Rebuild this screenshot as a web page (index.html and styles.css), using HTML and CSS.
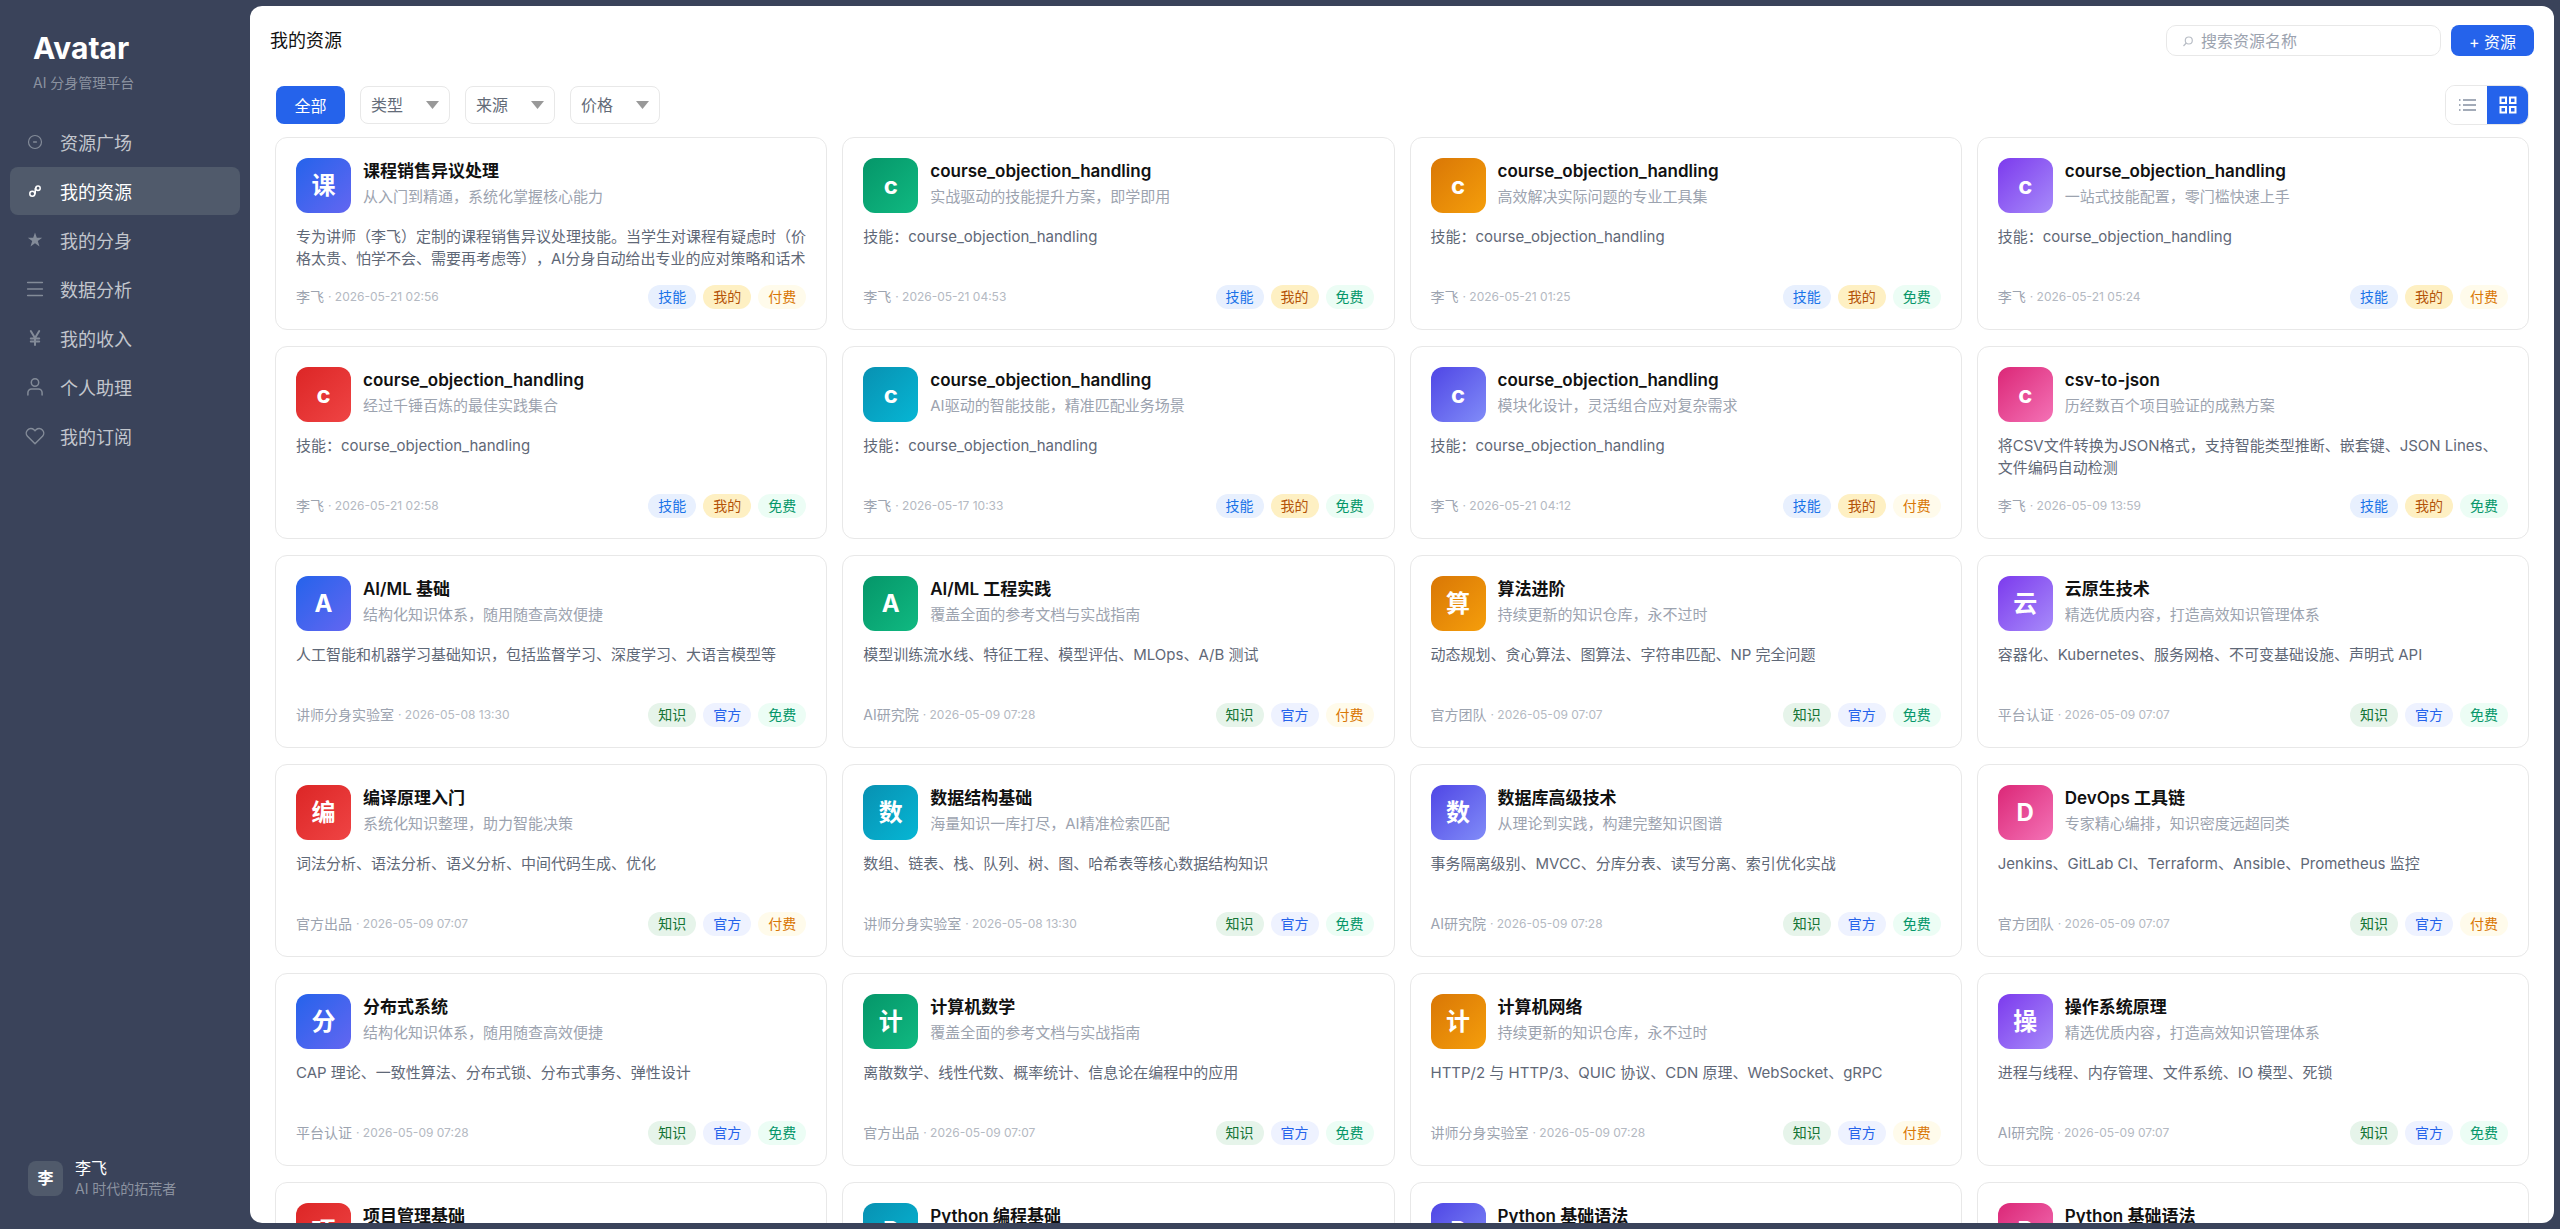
FILE: index.html
```html
<!DOCTYPE html>
<html lang="zh-CN">
<head>
<meta charset="utf-8">
<meta name="viewport" content="width=device-width, initial-scale=1">
<title>我的资源 - Avatar</title>
<link rel="stylesheet" href="styles.css">
</head>
<body>
<div class="app">
  <aside class="sidebar">
    <div class="brand">
      <h1 class="brand-name">Avatar</h1>
      <p class="brand-sub">AI 分身管理平台</p>
    </div>
    <nav class="nav">
      <a class="nav-item" href="#"><svg class="nav-icon" viewBox="0 0 20 20"><circle cx="10" cy="10" r="6.500" stroke-width="1.200"/><path d="M8.600 10h2.800" stroke-width="1.300"/></svg>资源广场</a>
      <a class="nav-item active" href="#"><svg class="nav-icon" viewBox="0 0 20 20"><circle cx="7.300" cy="12.700" r="2.500"/><circle cx="13" cy="7.200" r="2.200"/><path d="M9.800 13.200C11.600 11.800 8.800 8.200 10.900 6.600"/></svg>我的资源</a>
      <a class="nav-item" href="#"><svg class="nav-icon" viewBox="0 0 20 20"><path class="solid" d="M10 2.600l1.800 5.200h5.400l-4.400 3.300 1.700 5.300-4.500-3.200-4.500 3.200 1.700-5.300-4.400-3.300h5.400z"/></svg>我的分身</a>
      <a class="nav-item" href="#"><svg class="nav-icon" viewBox="0 0 20 20"><path d="M2.600 3.500h14.800M2.600 10h14.800M2.600 16.500h14.800"/></svg>数据分析</a>
      <a class="nav-item" href="#"><svg class="nav-icon" viewBox="0 0 20 20"><path d="M5.800 3l4.200 7 4.200-7M10 10v7M5.800 10.500h8.400M5.800 13.500h8.400" stroke-width="2"/></svg>我的收入</a>
      <a class="nav-item" href="#"><svg class="nav-icon" viewBox="0 0 20 20"><circle cx="10" cy="5.500" r="3.700"/><path d="M2.900 18v-2.300a3.700 3.700 0 0 1 3.700-3.700h6.800a3.700 3.700 0 0 1 3.700 3.700V18"/></svg>个人助理</a>
      <a class="nav-item" href="#"><svg class="nav-icon" viewBox="0 0 20 20"><path d="M10 17.800L2.500 10.300a4.600 4.600 0 0 1 6.500-6.500l1 1 1-1a4.600 4.600 0 0 1 6.500 6.500z"/></svg>我的订阅</a>
    </nav>
    <div class="user">
      <span class="user-avatar">李</span>
      <div>
        <p class="user-name">李飞</p>
        <p class="user-sub">AI 时代的拓荒者</p>
      </div>
    </div>
  </aside>

  <main class="panel">
    <header class="topbar">
      <h2 class="page-title">我的资源</h2>
      <label class="search">
        <svg class="search-icon" viewBox="0 0 12 12" aria-hidden="true"><circle cx="6.800" cy="5.500" r="3.500"/><path d="M4.300 8L1.500 11"/></svg>
        <input type="search" placeholder="搜索资源名称" aria-label="搜索资源名称">
      </label>
      <button class="btn-add" type="button">+ 资源</button>
    </header>

    <div class="filters">
      <button class="btn-all" type="button">全部</button>
      <span class="select"><select aria-label="类型"><option>类型</option></select></span>
      <span class="select"><select aria-label="来源"><option>来源</option></select></span>
      <span class="select"><select aria-label="价格"><option>价格</option></select></span>
      <div class="view-toggle">
        <button type="button" aria-label="列表"><svg viewBox="0 0 18 18"><path d="M5 4h13M5 9h13M5 14h13M1 4h1.500M1 9h1.500M1 14h1.500"/></svg></button>
        <button class="active" type="button" aria-label="网格"><svg viewBox="0 0 18 18"><path d="M1.500 1.500h5.500v5.500h-5.500zM11 1.500h5.500v5.500h-5.500zM1.500 11h5.500v5.500h-5.500zM11 11h5.500v5.500h-5.500z"/></svg></button>
      </div>
    </div>

    <section class="cards">
      <article class="card"><div class="head"><span class="logo">课</span><div><h3>课程销售异议处理</h3><p>从入门到精通，系统化掌握核心能力</p></div></div><p class="desc">专为讲师（李飞）定制的课程销售异议处理技能。当学生对课程有疑虑时（价格太贵、怕学不会、需要再考虑等），AI分身自动给出专业的应对策略和话术</p><footer><span class="author">李飞</span><time>· 2026-05-21 02:56</time><span class="tag skill">技能</span><span class="tag mine">我的</span><span class="tag paid">付费</span></footer></article>
      <article class="card"><div class="head"><span class="logo">c</span><div><h3>course_objection_handling</h3><p>实战驱动的技能提升方案，即学即用</p></div></div><p class="desc">技能：course_objection_handling</p><footer><span class="author">李飞</span><time>· 2026-05-21 04:53</time><span class="tag skill">技能</span><span class="tag mine">我的</span><span class="tag free">免费</span></footer></article>
      <article class="card"><div class="head"><span class="logo">c</span><div><h3>course_objection_handling</h3><p>高效解决实际问题的专业工具集</p></div></div><p class="desc">技能：course_objection_handling</p><footer><span class="author">李飞</span><time>· 2026-05-21 01:25</time><span class="tag skill">技能</span><span class="tag mine">我的</span><span class="tag free">免费</span></footer></article>
      <article class="card"><div class="head"><span class="logo">c</span><div><h3>course_objection_handling</h3><p>一站式技能配置，零门槛快速上手</p></div></div><p class="desc">技能：course_objection_handling</p><footer><span class="author">李飞</span><time>· 2026-05-21 05:24</time><span class="tag skill">技能</span><span class="tag mine">我的</span><span class="tag paid">付费</span></footer></article>

      <article class="card"><div class="head"><span class="logo">c</span><div><h3>course_objection_handling</h3><p>经过千锤百炼的最佳实践集合</p></div></div><p class="desc">技能：course_objection_handling</p><footer><span class="author">李飞</span><time>· 2026-05-21 02:58</time><span class="tag skill">技能</span><span class="tag mine">我的</span><span class="tag free">免费</span></footer></article>
      <article class="card"><div class="head"><span class="logo">c</span><div><h3>course_objection_handling</h3><p>AI驱动的智能技能，精准匹配业务场景</p></div></div><p class="desc">技能：course_objection_handling</p><footer><span class="author">李飞</span><time>· 2026-05-17 10:33</time><span class="tag skill">技能</span><span class="tag mine">我的</span><span class="tag free">免费</span></footer></article>
      <article class="card"><div class="head"><span class="logo">c</span><div><h3>course_objection_handling</h3><p>模块化设计，灵活组合应对复杂需求</p></div></div><p class="desc">技能：course_objection_handling</p><footer><span class="author">李飞</span><time>· 2026-05-21 04:12</time><span class="tag skill">技能</span><span class="tag mine">我的</span><span class="tag paid">付费</span></footer></article>
      <article class="card"><div class="head"><span class="logo">c</span><div><h3>csv-to-json</h3><p>历经数百个项目验证的成熟方案</p></div></div><p class="desc">将CSV文件转换为JSON格式，支持智能类型推断、嵌套键、JSON Lines、文件编码自动检测</p><footer><span class="author">李飞</span><time>· 2026-05-09 13:59</time><span class="tag skill">技能</span><span class="tag mine">我的</span><span class="tag free">免费</span></footer></article>

      <article class="card"><div class="head"><span class="logo">A</span><div><h3>AI/ML 基础</h3><p>结构化知识体系，随用随查高效便捷</p></div></div><p class="desc">人工智能和机器学习基础知识，包括监督学习、深度学习、大语言模型等</p><footer><span class="author">讲师分身实验室</span><time>· 2026-05-08 13:30</time><span class="tag know">知识</span><span class="tag official">官方</span><span class="tag free">免费</span></footer></article>
      <article class="card"><div class="head"><span class="logo">A</span><div><h3>AI/ML 工程实践</h3><p>覆盖全面的参考文档与实战指南</p></div></div><p class="desc">模型训练流水线、特征工程、模型评估、MLOps、A/B 测试</p><footer><span class="author">AI研究院</span><time>· 2026-05-09 07:28</time><span class="tag know">知识</span><span class="tag official">官方</span><span class="tag paid">付费</span></footer></article>
      <article class="card"><div class="head"><span class="logo">算</span><div><h3>算法进阶</h3><p>持续更新的知识仓库，永不过时</p></div></div><p class="desc">动态规划、贪心算法、图算法、字符串匹配、NP 完全问题</p><footer><span class="author">官方团队</span><time>· 2026-05-09 07:07</time><span class="tag know">知识</span><span class="tag official">官方</span><span class="tag free">免费</span></footer></article>
      <article class="card"><div class="head"><span class="logo">云</span><div><h3>云原生技术</h3><p>精选优质内容，打造高效知识管理体系</p></div></div><p class="desc">容器化、Kubernetes、服务网格、不可变基础设施、声明式 API</p><footer><span class="author">平台认证</span><time>· 2026-05-09 07:07</time><span class="tag know">知识</span><span class="tag official">官方</span><span class="tag free">免费</span></footer></article>

      <article class="card"><div class="head"><span class="logo">编</span><div><h3>编译原理入门</h3><p>系统化知识整理，助力智能决策</p></div></div><p class="desc">词法分析、语法分析、语义分析、中间代码生成、优化</p><footer><span class="author">官方出品</span><time>· 2026-05-09 07:07</time><span class="tag know">知识</span><span class="tag official">官方</span><span class="tag paid">付费</span></footer></article>
      <article class="card"><div class="head"><span class="logo">数</span><div><h3>数据结构基础</h3><p>海量知识一库打尽，AI精准检索匹配</p></div></div><p class="desc">数组、链表、栈、队列、树、图、哈希表等核心数据结构知识</p><footer><span class="author">讲师分身实验室</span><time>· 2026-05-08 13:30</time><span class="tag know">知识</span><span class="tag official">官方</span><span class="tag free">免费</span></footer></article>
      <article class="card"><div class="head"><span class="logo">数</span><div><h3>数据库高级技术</h3><p>从理论到实践，构建完整知识图谱</p></div></div><p class="desc">事务隔离级别、MVCC、分库分表、读写分离、索引优化实战</p><footer><span class="author">AI研究院</span><time>· 2026-05-09 07:28</time><span class="tag know">知识</span><span class="tag official">官方</span><span class="tag free">免费</span></footer></article>
      <article class="card"><div class="head"><span class="logo">D</span><div><h3>DevOps 工具链</h3><p>专家精心编排，知识密度远超同类</p></div></div><p class="desc">Jenkins、GitLab CI、Terraform、Ansible、Prometheus 监控</p><footer><span class="author">官方团队</span><time>· 2026-05-09 07:07</time><span class="tag know">知识</span><span class="tag official">官方</span><span class="tag paid">付费</span></footer></article>

      <article class="card"><div class="head"><span class="logo">分</span><div><h3>分布式系统</h3><p>结构化知识体系，随用随查高效便捷</p></div></div><p class="desc">CAP 理论、一致性算法、分布式锁、分布式事务、弹性设计</p><footer><span class="author">平台认证</span><time>· 2026-05-09 07:28</time><span class="tag know">知识</span><span class="tag official">官方</span><span class="tag free">免费</span></footer></article>
      <article class="card"><div class="head"><span class="logo">计</span><div><h3>计算机数学</h3><p>覆盖全面的参考文档与实战指南</p></div></div><p class="desc">离散数学、线性代数、概率统计、信息论在编程中的应用</p><footer><span class="author">官方出品</span><time>· 2026-05-09 07:07</time><span class="tag know">知识</span><span class="tag official">官方</span><span class="tag free">免费</span></footer></article>
      <article class="card"><div class="head"><span class="logo">计</span><div><h3>计算机网络</h3><p>持续更新的知识仓库，永不过时</p></div></div><p class="desc">HTTP/2 与 HTTP/3、QUIC 协议、CDN 原理、WebSocket、gRPC</p><footer><span class="author">讲师分身实验室</span><time>· 2026-05-09 07:28</time><span class="tag know">知识</span><span class="tag official">官方</span><span class="tag paid">付费</span></footer></article>
      <article class="card"><div class="head"><span class="logo">操</span><div><h3>操作系统原理</h3><p>精选优质内容，打造高效知识管理体系</p></div></div><p class="desc">进程与线程、内存管理、文件系统、IO 模型、死锁</p><footer><span class="author">AI研究院</span><time>· 2026-05-09 07:07</time><span class="tag know">知识</span><span class="tag official">官方</span><span class="tag free">免费</span></footer></article>

      <article class="card"><div class="head"><span class="logo">项</span><div><h3>项目管理基础</h3></div></div></article>
      <article class="card"><div class="head"><span class="logo">P</span><div><h3>Python 编程基础</h3></div></div></article>
      <article class="card"><div class="head"><span class="logo">P</span><div><h3>Python 基础语法</h3></div></div></article>
      <article class="card"><div class="head"><span class="logo">P</span><div><h3>Python 基础语法</h3></div></div></article>
    </section>
  </main>
</div>
</body>
</html>
```
FILE: styles.css
```css
* { box-sizing: border-box; margin: 0; padding: 0; }

body {
  font-family: Inter, "Noto Sans CJK SC", sans-serif;
  font-size: 16px;
  background: #3a435a;
  color: #111;
  text-spacing-trim: space-all;
}

button, input, select { font: inherit; }
button { border: 0; cursor: pointer; }

.app {
  display: grid;
  grid-template-columns: 250px minmax(0, 1fr);
  height: 100vh;
}

/* Sidebar */
.sidebar { display: flex; flex-direction: column; }
.brand { padding: 30px 33px 0; }
.brand-name { font-size: 30px; line-height: 36px; font-weight: 700; color: #fff; }
.brand-sub { margin-top: 7px; font-size: 14px; line-height: 20px; color: #8b92a0; }

.nav { display: flex; flex-direction: column; gap: 1px; padding: 25px 10px 0; }
.nav-item {
  display: flex;
  align-items: center;
  gap: 15px;
  height: 48px;
  padding: 0 15px;
  border-radius: 8px;
  font-size: 18px;
  color: #c2c6cd;
  text-decoration: none;
}
.nav-item.active { background: #505a6b; color: #fff; }
.nav-icon { width: 20px; height: 20px; fill: none; stroke: #838b98; stroke-width: 1.5; stroke-linecap: round; stroke-linejoin: round; }
.nav-icon .solid { fill: #838b98; stroke: none; }
.active .nav-icon { stroke: #fff; }

.user { display: flex; align-items: center; gap: 12px; margin-top: auto; padding: 0 28px 30px; }
.user-avatar {
  width: 35px;
  height: 35px;
  border-radius: 8px;
  background: #505a6b;
  color: #fff;
  font-weight: 700;
  line-height: 35px;
  text-align: center;
}
.user-name { line-height: 22px; color: #fff; }
.user-sub { font-size: 14px; line-height: 20px; color: #8b92a0; }

/* Main panel */
.panel {
  display: flex;
  flex-direction: column;
  margin: 6px 6px 6px 0;
  border-radius: 12px;
  background: #fff;
  overflow: hidden;
}
.topbar { display: flex; align-items: center; gap: 10px; padding: 19px 20px 0; }
.page-title { flex: 1; font-size: 18px; line-height: 31px; font-weight: 400; }
.search {
  display: flex;
  align-items: center;
  gap: 7px;
  width: 275px;
  height: 31px;
  padding: 0 15px;
  border: 1px solid #e8e8e8;
  border-radius: 10px;
}
.search-icon { width: 12px; height: 12px; fill: none; stroke: #b9bec6; stroke-width: 1.2; }
.search input { flex: 1; min-width: 0; border: 0; outline: 0; background: none; color: #111; }
.search input::placeholder { color: #9ca3af; }
.btn-add { width: 83px; height: 31px; border-radius: 8px; background: #2563eb; color: #fff; }

.filters { display: flex; align-items: center; gap: 15px; padding: 29px 25px 12px 26px; }
.btn-all { width: 69px; height: 38px; border-radius: 8px; background: #2563eb; color: #fff; }
.select { display: grid; align-items: center; width: 90px; height: 38px; }
.select select {
  grid-area: 1 / 1;
  height: 38px;
  padding: 0 10px;
  border: 1px solid #e8e8e8;
  border-radius: 8px;
  background: #fff;
  color: #636b78;
  appearance: none;
}
.select::after {
  content: "";
  grid-area: 1 / 1;
  justify-self: end;
  width: 13px;
  height: 8px;
  margin-right: 11px;
  background: #999;
  clip-path: polygon(0 0, 100% 0, 50% 100%);
  pointer-events: none;
}
.view-toggle {
  display: flex;
  margin-left: auto;
  border: 1px solid #e8e8e8;
  border-radius: 10px;
  overflow: hidden;
}
.view-toggle button { display: grid; place-items: center; width: 41px; height: 38px; background: #fff; }
.view-toggle svg { width: 18px; height: 18px; fill: none; stroke: #a3abb8; stroke-width: 2; }
.view-toggle .active { background: #2563eb; }
.view-toggle .active svg { stroke: #fff; }

/* Resource cards */
.cards {
  flex: 1;
  min-height: 0;
  display: grid;
  grid-template-columns: repeat(4, minmax(0, 1fr));
  grid-auto-rows: 193px;
  gap: 16px 15px;
  padding: 0 25px;
  overflow: hidden;
}
.card {
  display: flex;
  flex-direction: column;
  padding: 20px;
  border: 1px solid #e8e8e8;
  border-radius: 12px;
}
.head { display: flex; gap: 12px; }
.logo {
  width: 55px;
  height: 55px;
  border-radius: 12px;
  color: #fff;
  font-size: 24px;
  font-weight: 700;
  line-height: 55px;
  text-align: center;
}
.card:nth-child(8n + 1) .logo { background: linear-gradient(135deg, #2563eb, #6366f1); }
.card:nth-child(8n + 2) .logo { background: linear-gradient(135deg, #059669, #10b981); }
.card:nth-child(8n + 3) .logo { background: linear-gradient(135deg, #d97706, #f59e0b); }
.card:nth-child(8n + 4) .logo { background: linear-gradient(135deg, #7c3aed, #a78bfa); }
.card:nth-child(8n + 5) .logo { background: linear-gradient(135deg, #dc2626, #ef4444); }
.card:nth-child(8n + 6) .logo { background: linear-gradient(135deg, #0891b2, #06b6d4); }
.card:nth-child(8n + 7) .logo { background: linear-gradient(135deg, #4f46e5, #818cf8); }
.card:nth-child(8n + 8) .logo { background: linear-gradient(135deg, #db2777, #f472b6); }
.head h3 { font-size: 17px; line-height: 26px; font-weight: 600; }
.head p { margin-top: 2px; font-size: 15px; line-height: 22px; color: #9ca3af; }
.desc { margin-top: 13px; font-size: 15px; line-height: 22px; color: #5f6877; }
.card footer { display: flex; align-items: center; margin-top: auto; font-size: 14px; line-height: 24px; }
.author { color: #9ca3af; }
.card time { margin: 0 auto 0 4px; font-size: 12px; color: #b4b9c2; }
.tag { margin-left: 7px; padding: 0 10px; border-radius: 12px; }
.skill { background: #e8f0fe; color: #1a73e8; }
.mine { background: #fef0c3; color: #b45309; }
.paid { background: #fffbeb; color: #d97706; }
.free { background: #ecfdf5; color: #059669; }
.know { background: #e6f4ea; color: #137333; }
.official { background: #eef2ff; color: #2563eb; }
```
